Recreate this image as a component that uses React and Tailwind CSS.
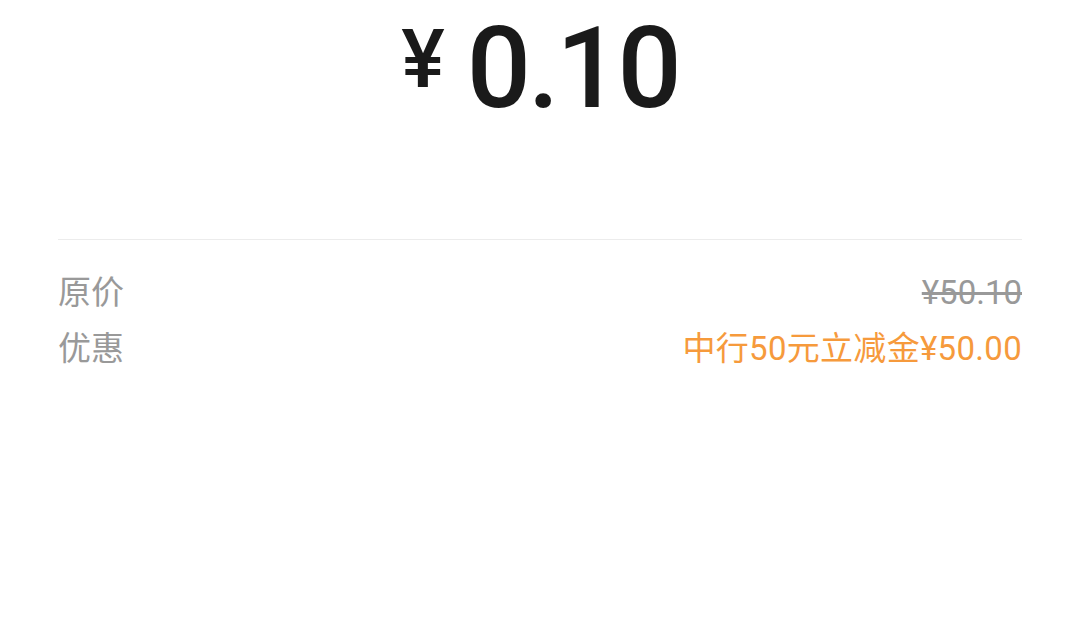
export default function App() {
  return (
    <div className="w-[1080px] h-[635px] bg-white" style={{ fontFamily: 'Roboto, "Noto Sans CJK SC", sans-serif' }}>
      <div className="flex items-start justify-center pt-[12px] h-[239px]">
        <div className="flex items-start text-[#1a1a1a]" style={{ fontFamily: 'Roboto, "Noto Sans", sans-serif' }}>
          <span className="text-[82px] leading-none font-medium mt-[6px] mr-[22px]">¥</span>
          <span className="text-[113px] leading-none font-medium tracking-[-3px]">0.10</span>
        </div>
      </div>
      <div className="mx-[58px] border-t border-[#ececec]" />
      <div className="mx-[58px] pt-[31px] flex flex-col gap-[12px] text-[33px] leading-[44px]">
        <div className="flex justify-between">
          <span className="text-[#999999]">原价</span>
          <span className="text-[#999999] line-through">¥50.10</span>
        </div>
        <div className="flex justify-between">
          <span className="text-[#999999]">优惠</span>
          <span className="text-[#f69a3c] tracking-[0.3px]">中行50元立减金¥50.00</span>
        </div>
      </div>
    </div>
  );
}
